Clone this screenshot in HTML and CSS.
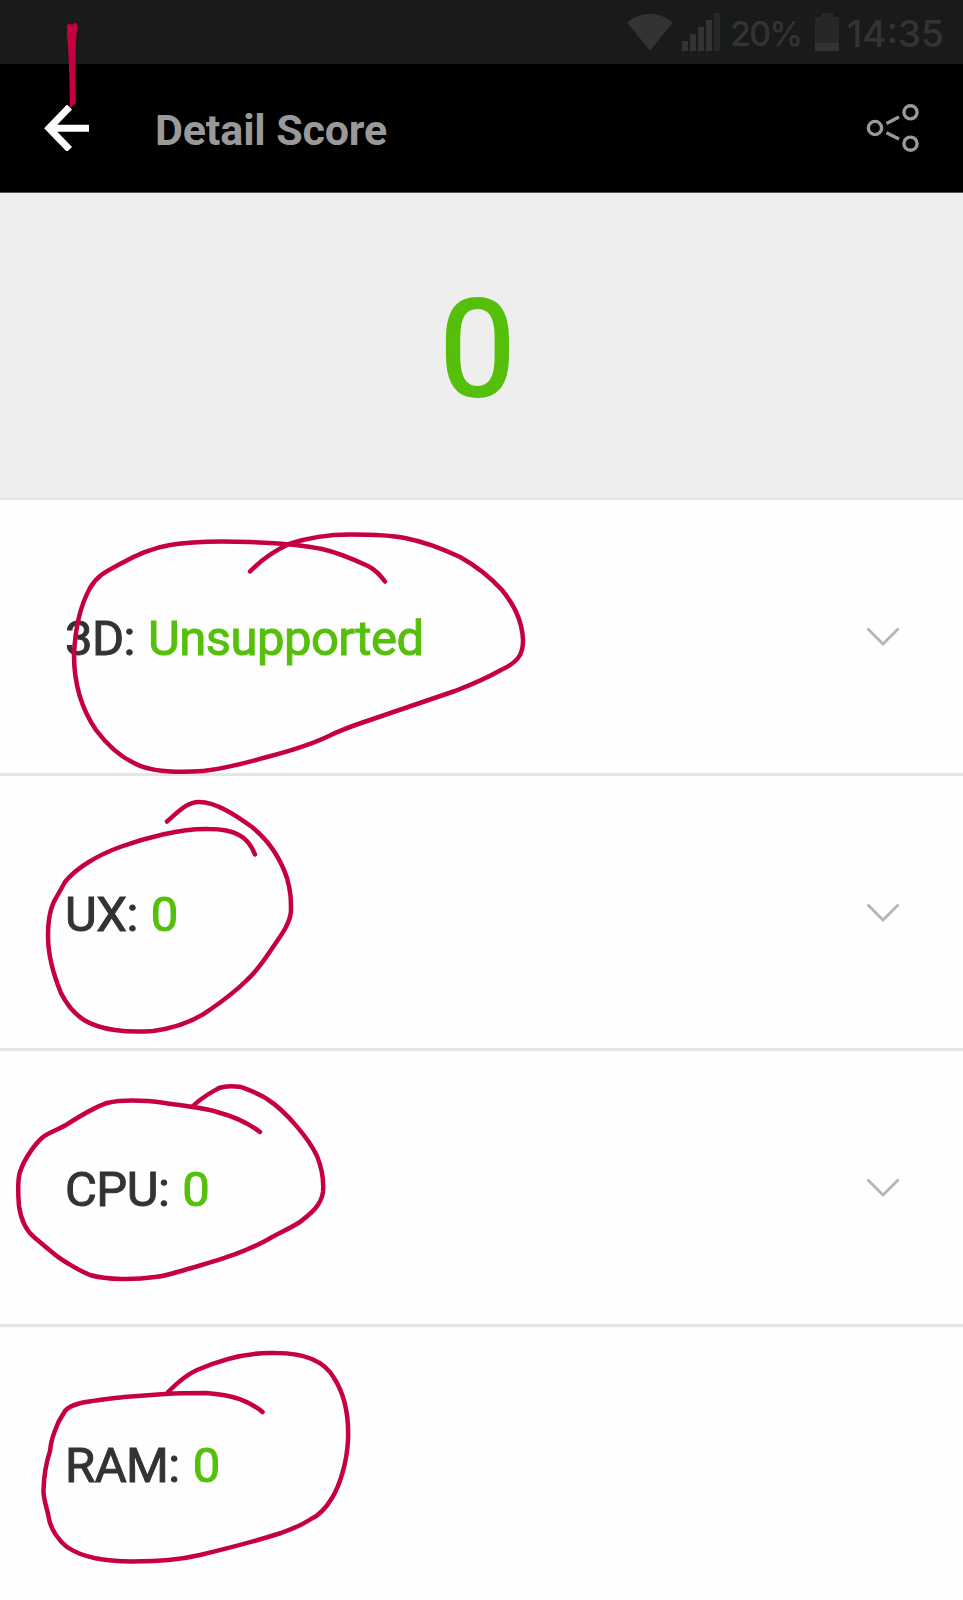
FILE: index.html
```html
<!DOCTYPE html>
<html lang="en">
<head>
<meta charset="utf-8">
<title>Detail Score</title>
<link rel="stylesheet" href="styles.css">
</head>
<body>
<div class="screen">
  <header class="status">
    <svg class="wifi" width="46" height="38" viewBox="0 0 46 38"><path d="M0 9.500Q23-8 46 9.500L23 37.500Z"/></svg>
    <svg class="signal" width="38" height="38" viewBox="0 0 38 38"><path d="M0 28h6v10H0zM8 21h6v17H8zM16 14h6v24h-6zM24 7h6v31h-6z"/><path class="dim" d="M32 0h6v38h-6z"/></svg>
    <span class="percent">20%</span>
    <svg class="battery" width="24" height="38" viewBox="0 0 24 38"><path class="dim" d="M6 0h12v4h6v26H0V4h6z"/><path d="M0 30h24v8H0z"/></svg>
    <span class="clock">14:35</span>
  </header>
  <nav class="bar">
    <svg class="back" width="46" height="46" viewBox="0 0 46 46"><path d="M25.500 2 5 23.300 25.500 44.500M5 23.300H45"/></svg>
    <h1 class="title">Detail Score</h1>
    <svg class="share" width="54" height="50" viewBox="0 0 54 50"><circle cx="9" cy="25" r="6.600"/><circle cx="44.500" cy="9.300" r="6.600"/><circle cx="44.500" cy="40.700" r="6.600"/><path d="M20.500 20.500 33 14M20.500 29.800 33 36"/></svg>
  </nav>
  <section class="total"><span class="big">0</span></section>
  <main>
    <div class="row"><p class="label">3D: <span class="value">Unsupported</span></p><svg class="chevron" width="34" height="20" viewBox="0 0 34 20"><path d="M1.500 1.500 17 17 32.500 1.500"/></svg></div>
    <div class="row"><p class="label">UX: <span class="value">0</span></p><svg class="chevron" width="34" height="20" viewBox="0 0 34 20"><path d="M1.500 1.500 17 17 32.500 1.500"/></svg></div>
    <div class="row"><p class="label">CPU: <span class="value">0</span></p><svg class="chevron" width="34" height="20" viewBox="0 0 34 20"><path d="M1.500 1.500 17 17 32.500 1.500"/></svg></div>
    <div class="row"><p class="label">RAM: <span class="value">0</span></p></div>
  </main>
  <svg class="ink" width="963" height="1600" viewBox="0 0 963 1600">
    <path class="fill" d="M67 26Q67 23.500 69.500 23.500L72 25 74.500 23Q77.500 23 77.500 26C75 45 74.500 70 76 103L70 108C69.500 78 69 55 67 35Z"/>
    <path d="M250 571.500C262 559 274 551 289 544C310 537 330 534.500 350 534.500C370 534.500 390 535 405 538C425 542 441 548 460 557C478 567 490 577 502 590C511 601 518 613 521 626C524 638 523 649 520 655C516 662 510 666 501 670C487 678 468 686 455 691L370 720C355 725 343 729 331 735C315 743 290 751 267 757C245 763 225 769 203 771C175 773 150 772 134 763C119 756 105 742 96 730C83 711 74 685 74 655C75 630 79 608 90 588C97 576 105 572 120 564C136 555 152 548 170 545C195 540.500 225 541 250 542C277 543 303 545 322 549C340 553 355 560 368 566C376 570 380 575 385 581.500"/>
    <path d="M167 821.500C179 811 187 802 199 802C217 802 238 817 252 827C268 840 280 857 287 878C291 892 291 900 291 911C290 925 279 938 271 950C263 962 257 971 247 980C237 990 224 1000 211 1009C195 1021 175 1028 153 1031C127 1033 100 1030 84 1020C73 1013 65 1001 61 993C54 976 48 958 48 936C48 920 51 906 56 898L65 882C76 868 98 855 120 847C145 838 182 828 209 829C221 829 232 831 239 835C247 839 252 847 255 854.500"/>
    <path d="M193 1106C202 1097 212 1092 219 1088C225 1086 234 1086 241 1087C249 1090 260 1094 267 1099C286 1111 309 1139 317 1156C321 1166 324 1180 323 1192C321 1206 310 1214 300 1222C289 1229 277 1234 267 1240C245 1252 225 1258 195 1267C180 1271 167 1276 155 1277C135 1280 107 1280 90 1275C80 1271 61 1260 53 1253L35 1238C25 1230 21 1220 19 1206C18 1194 17 1182 20 1172C25 1157 36 1143 43 1137C50 1132 59 1129 66 1125C80 1116 95 1107 107 1103C125 1099 150 1101 165 1103C185 1106 205 1108 217 1112C232 1116 247 1122 260 1132"/>
    <path d="M168 1392C178 1382 188 1374 197 1370C222 1359 249 1352 276 1353C305 1353 325 1362 334 1378C345 1395 349 1416 348 1440C347 1462 340 1485 332 1498C326 1508 320 1515 311 1519C302 1525 292 1529 281 1533C250 1543 225 1549 200 1555C179 1560 160 1561 132 1561.500C105 1561 83 1558 67 1547C58 1540 51 1529 49 1519C47 1507 43 1499 43.500 1490C44 1474 47 1460 50 1451C51 1438 55 1430 59 1421L65 1411C69 1406 74 1405 81 1403C90 1401 108 1399 124 1397L165 1394C180 1393 195 1393 206 1393C234 1395 249 1401 262.500 1412"/>
  </svg>
</div>
</body>
</html>
```
FILE: styles.css
```css
* { box-sizing: border-box; margin: 0; }
body { background: #fefefe; font-family: Roboto, sans-serif; }
.screen { position: relative; width: 963px; height: 1600px; overflow: hidden; }
.status { display: flex; height: 64px; background: #191b1a; color: #333; fill: #333; padding: 13px 19px 0 627px; font-family: Inter, sans-serif; white-space: nowrap; }
.status svg { flex: none; }
.dim { fill: #262827; }
.signal { margin-left: 9px; }
.percent { font-size: 34px; line-height: 41px; font-weight: 500; width: 81px; margin-left: 10px; letter-spacing: -1.8px; }
.battery { margin-left: 4px; }
.clock { font-size: 37px; line-height: 42px; font-weight: 500; margin-left: 8px; }
.bar { display: flex; align-items: flex-start; height: 129px; background: #000; border-bottom: 1px solid #555; padding: 41px 43px 0 44px; }
.back { fill: none; stroke: #fff; stroke-width: 7; }
.title { font-size: 43px; line-height: 50px; font-weight: 700; color: #999; margin-left: 65px; letter-spacing: -0.15px; }
.share { fill: none; stroke: #999; stroke-width: 3.4; margin-left: auto; margin-top: -2px; }
.total { height: 307px; background: #eee; border-bottom: 2px solid #e5e5e5; padding: 76px 8px 0 0; text-align: center; }
.big { display: block; font-size: 136px; line-height: 162px; color: #56bf0b; font-weight: 400; -webkit-text-stroke: 2px; }
.row { display: flex; justify-content: space-between; align-items: flex-start; height: 275.5px; border-bottom: 3px solid #e5e5e5; padding: 110px 63px 0 65px; }
.row:last-child { border-bottom: 0; }
.label { font-size: 49px; line-height: 58px; color: #333; letter-spacing: -0.55px; -webkit-text-stroke: 1px; }
.value { color: #56bf0b; margin-left: 1.5px; }
.chevron { fill: none; stroke: #b5b5b5; stroke-width: 2.8; margin-top: 17px; }
.ink { position: absolute; left: 0; top: 0; fill: none; stroke: #c6003f; stroke-width: 4.5; stroke-linecap: round; stroke-linejoin: round; }
.ink .fill { fill: #c6003f; stroke: none; }
```
